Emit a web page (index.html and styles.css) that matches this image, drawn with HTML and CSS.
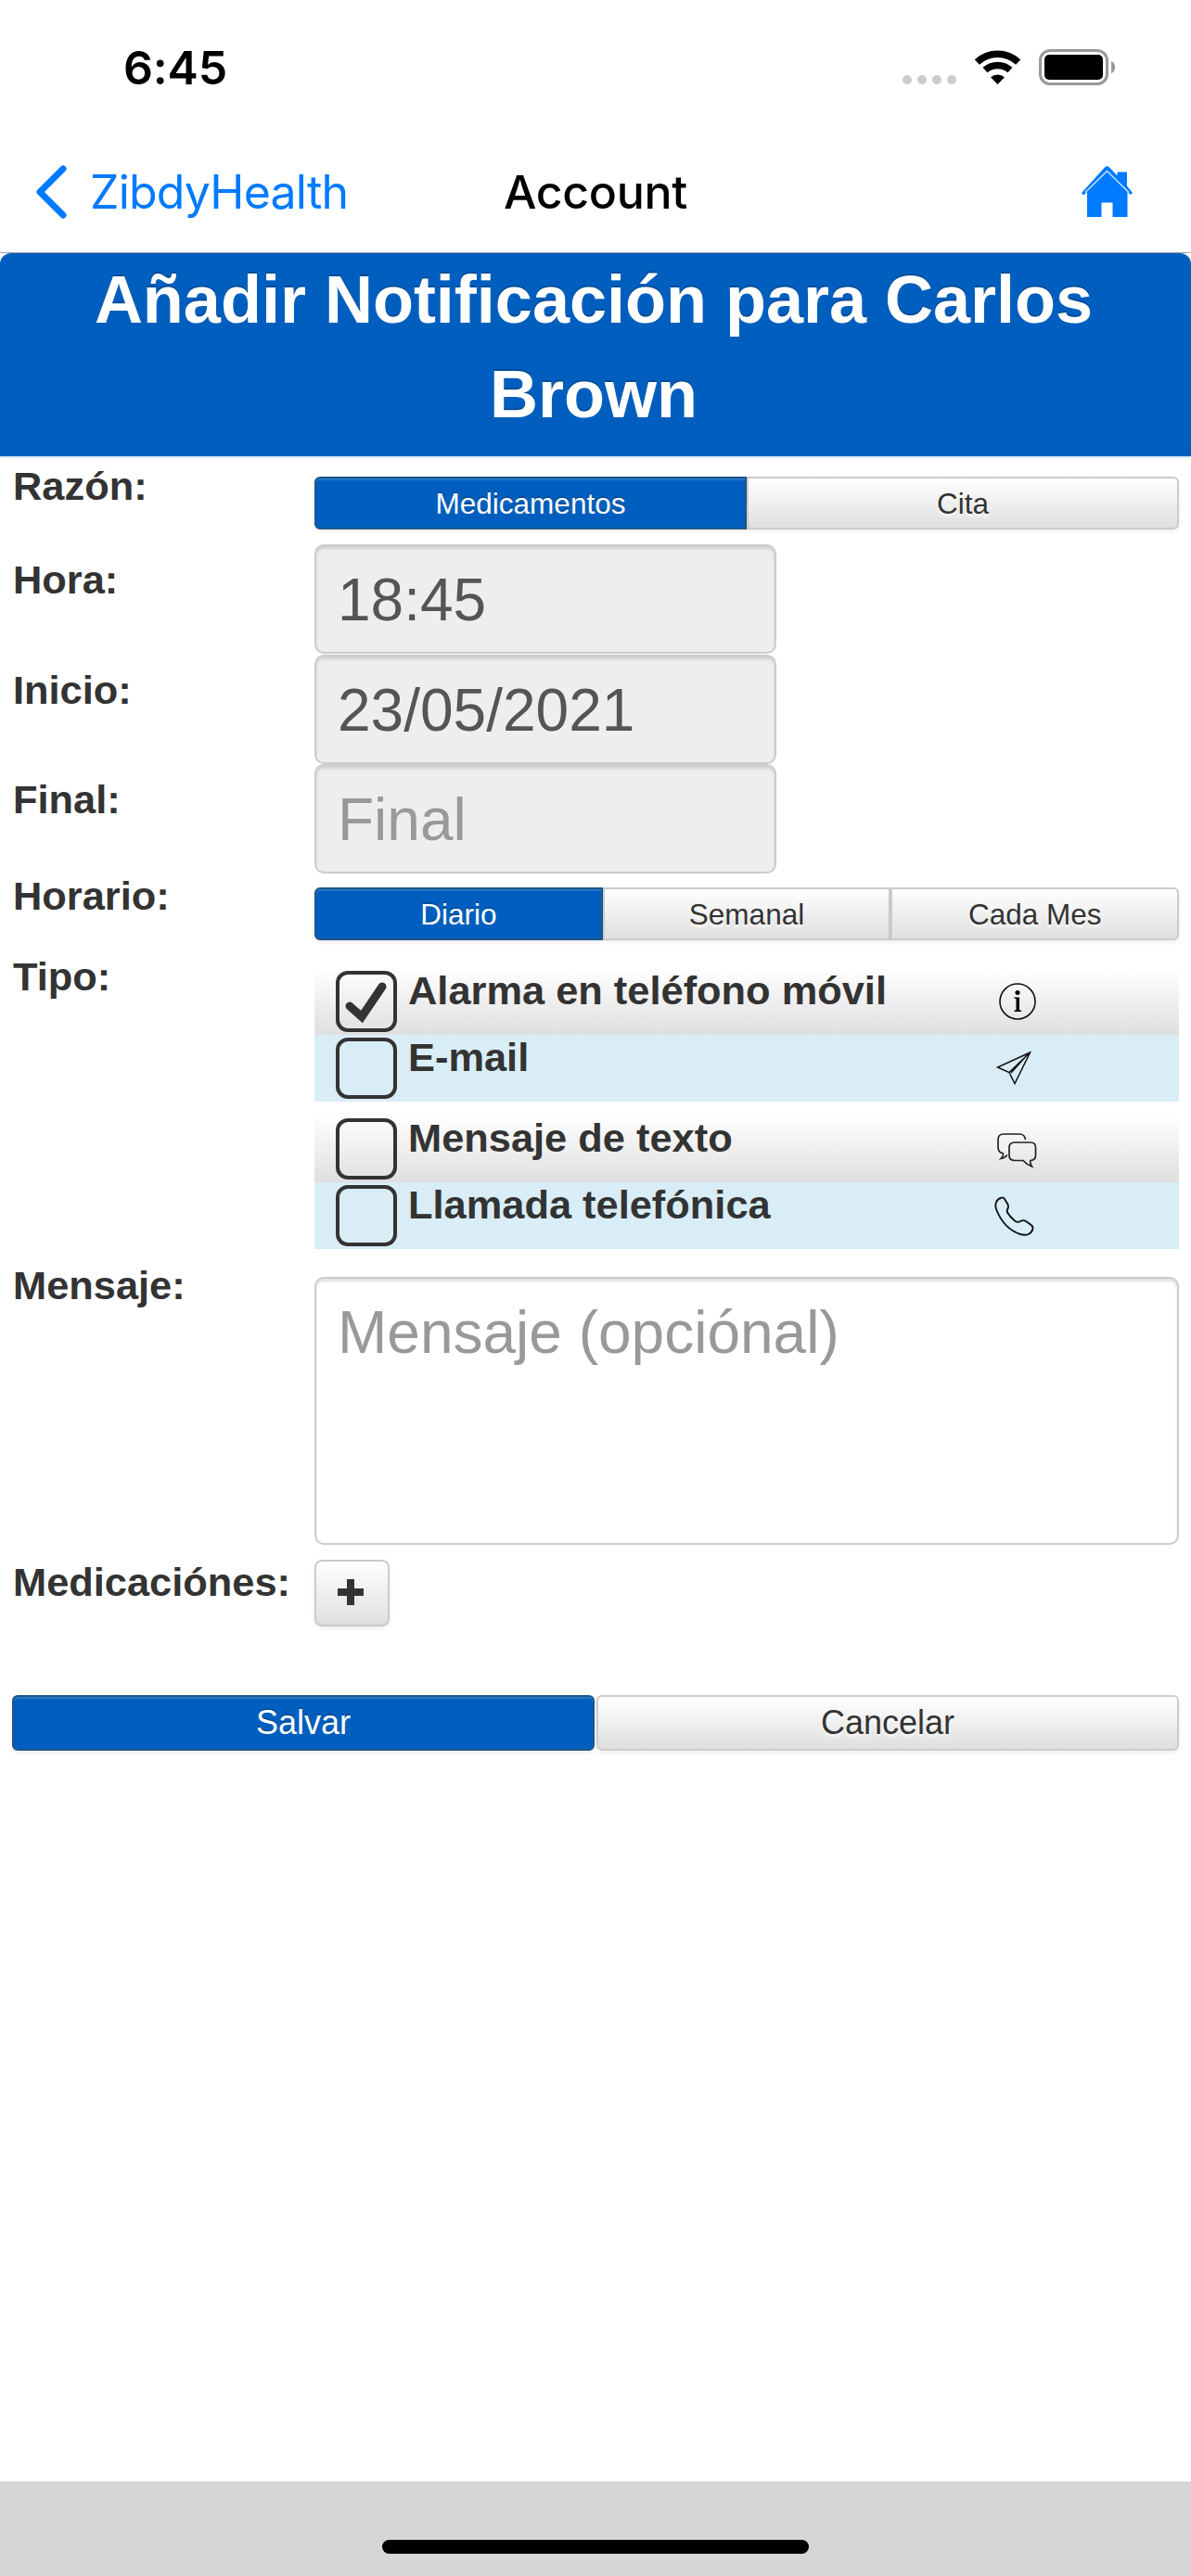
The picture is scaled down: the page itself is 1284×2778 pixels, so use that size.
FILE: index.html
```html
<!DOCTYPE html>
<html lang="es">

<head>
	<meta charset="utf-8">
	<title>Account</title>
	<link rel="stylesheet" href="styles.css">
</head>

<body>
	<div class="status">
		<span class="clock">6:45</span>
		<svg class="status-icons" width="232" height="42" viewBox="0 0 232 42">
			<g fill="#ccc">
				<circle cx="6" cy="34" r="5"/>
				<circle cx="22" cy="34" r="5"/>
				<circle cx="38" cy="34" r="5"/>
				<circle cx="54" cy="34" r="5"/>
			</g>
			<path d="M103.500 39 L96 31.200 A11.500 11.500 0 0 1 111 31.200 Z"/>
			<path d="M90 23.500 A20.500 20.500 0 0 1 117 23.500" fill="none" stroke="#000" stroke-width="7.500"/>
			<path d="M81.300 15 A32.500 32.500 0 0 1 125.700 15" fill="none" stroke="#000" stroke-width="7.500"/>
			<rect x="149.500" y="2.500" width="72" height="36" rx="10.500" fill="none" stroke="#999" stroke-width="3"/>
			<rect x="154" y="7" width="63" height="27" rx="5"/>
			<path d="M226 14 C231.500 16 231.500 25 226 27 Z" fill="#999"/>
		</svg>
	</div>

	<div class="navbar">
		<a class="back" href="#">
			<svg width="36" height="60" viewBox="0 0 36 60"><path d="M31 5 L6 30 L31 55" fill="none" stroke="#007aff" stroke-width="7" stroke-linecap="round" stroke-linejoin="round"/></svg>
			<span>ZibdyHealth</span>
		</a>
		<span class="title">Account</span>
		<a class="home" href="#">
			<svg width="56" height="56" viewBox="0 0 56 56">
				<path d="M0 29 L25 1.500 Q27.500 -1 30 1.500 L38.500 10.500 V6.500 H49 V21.500 L55 29 L53 31 L49.500 28 V55 H33.500 V39.500 H21.500 V55 H6 V28 L2 31.500 Z" fill="#007aff"/>
				<path d="M4 28.500 L27.500 5.500 L51 28.500" fill="none" stroke="#cfe5ff" stroke-width="1.400"/>
			</svg>
		</a>
	</div>

	<h1>Añadir Notificación para Carlos Brown</h1>

	<form>
		<div class="row row-reason">
			<label>Razón:</label>
			<div class="group">
				<button type="button" class="btn active">Medicamentos</button>
				<button type="button" class="btn">Cita</button>
			</div>
		</div>
		<div class="row row-input">
			<label>Hora:</label>
			<input type="text" value="18:45" readonly>
		</div>
		<div class="row row-input">
			<label>Inicio:</label>
			<input type="text" value="23/05/2021" readonly>
		</div>
		<div class="row row-input">
			<label>Final:</label>
			<input type="text" placeholder="Final" readonly>
		</div>
		<div class="row row-schedule">
			<label>Horario:</label>
			<div class="group">
				<button type="button" class="btn active">Diario</button>
				<button type="button" class="btn">Semanal</button>
				<button type="button" class="btn">Cada Mes</button>
			</div>
		</div>
		<div class="row row-type">
			<label>Tipo:</label>
			<div class="types">
				<div class="type">
					<span class="check"><svg width="66" height="66" viewBox="0 0 66 66"><path d="M15 38 L28 49.500 L50 17" fill="none" stroke="#333" stroke-width="9" stroke-linecap="round"/></svg></span>
					<span class="name">Alarma en teléfono móvil</span>
					<svg class="icon" width="50" height="72" viewBox="0 0 50 72">
						<circle cx="27" cy="36" r="19" fill="none" stroke="#111" stroke-width="1.600"/>
						<circle cx="27" cy="26.500" r="2.500"/>
						<path d="M23.500 31.500 H29 V45.500 H31 V47 H23.500 V45.500 H25.500 V33 H23.500 Z"/>
					</svg>
				</div>
				<div class="type blue">
					<span class="check"></span>
					<span class="name">E-mail</span>
					<svg class="icon" width="50" height="72" viewBox="0 0 50 72" fill="none" stroke="#111" stroke-width="1.500">
						<path d="M40.500 19 L5.500 35 L18 40.500 L24 52.500 Z M40.500 19 L18 40.500 M37 22 L20 41"/>
					</svg>
				</div>
				<div class="type second">
					<span class="check"></span>
					<span class="name">Mensaje de texto</span>
					<svg class="icon" width="50" height="72" viewBox="0 0 50 72" fill="none" stroke="#222" stroke-width="1.700">
						<path d="M35.500 26 C35 22 33 20 29 20 H12 Q6 20 6 26 V34 Q6 40 11 40.500 Q12.500 43 9 46.500 Q13 46 16 42.500"/>
						<path d="M24 29 H41 Q46.500 29 46.500 34.500 V43 Q46.500 48 41 48.500 Q40 51 42.500 55 Q37 53 33 48.500 H24 Q18 48.500 18 43 V34.500 Q18 29 24 29 Z"/>
					</svg>
				</div>
				<div class="type blue">
					<span class="check"></span>
					<span class="name">Llamada telefónica</span>
					<svg class="icon" width="50" height="72" viewBox="0 0 50 72" fill="none" stroke="#111" stroke-width="1.900">
						<path d="M10 16.500 C4 18 2 24 4 29 C9 42 18 52 30 56 C37 58 42 56 43.500 50 C44 48 43 47 41 45.500 L36 42 C34 40.500 32 41 30 42 C28 43.500 26 43 24 41.500 C21 39 18 36 16 32.500 C15 31 16 29 17 27 C17.500 25 17 24 16 23 L13 18 C12 16.500 11.500 16 10 16.500 Z"/>
					</svg>
				</div>
			</div>
		</div>
		<div class="row row-message">
			<label>Mensaje:</label>
			<textarea placeholder="Mensaje (opciónal)"></textarea>
		</div>
		<div class="row row-meds">
			<label>Medicaciónes:</label>
			<button type="button" class="btn add"><svg width="28" height="28" viewBox="0 0 28 28"><path d="M10 0 H18 V10 H28 V18 H18 V28 H10 V18 H0 V10 H10 Z" fill="#333"/></svg></button>
		</div>
		<div class="actions">
			<button type="button" class="btn active">Salvar</button>
			<button type="button" class="btn">Cancelar</button>
		</div>
	</form>

	<div class="footer"><div class="home-bar"></div></div>
</body>

</html>
```

FILE: styles.css
```css
* {margin: 0; padding: 0; box-sizing: border-box;}
body {width: 1284px; height: 2778px; display: flex; flex-direction: column; background: #fff; color: #333; font-family: "Liberation Sans", Arial, sans-serif; overflow: hidden;}
svg {display: block; flex: none;}

/* status bar */
.status {height: 141px; padding: 0 80px 0 133px; display: flex; justify-content: space-between; align-items: flex-start; color: #000; font-family: Inter, sans-serif;}
.clock {margin-top: 43px; font-size: 50px; line-height: 60px; font-weight: 600; letter-spacing: -.2px;}
.status-icons {margin-top: 52px;}

/* navigation bar */
.navbar {height: 132px; padding: 0 62px; display: grid; grid-template-columns: 1fr auto 1fr; align-items: center; border-bottom: 1px solid #a0a4a8; font-family: Inter, sans-serif; font-size: 50px; line-height: 60px;}
.back {margin-left: -25px; display: flex; align-items: center; gap: 24px; color: #007aff; text-decoration: none; letter-spacing: -.8px;}
.title {color: #000; font-weight: 500; letter-spacing: -.3px;}
.home {justify-self: end;}

h1 {height: 219px; padding: 0 62px 0 58px; background: #005fbe; border-radius: 12px 12px 0 0; color: #fff; font-size: 72px; line-height: 101.500px; text-align: center; text-shadow: 0 -2px 0 rgba(0,0,0,.2); box-shadow: 0 1px 3px rgba(0,95,190,.3);}

/* form rows */
form {flex: 1;}
.row {display: flex; align-items: flex-start; padding: 0 13px 0 14px;}
.row label {width: 325px; flex: none; font-size: 43.400px; line-height: 46px; font-weight: bold;}
.row-reason {height: 95px;}
.row-reason label {padding-top: 9px;}
.row-reason .group {margin-top: 22px;}
.row-input {height: 118.700px;}
.row-input label {padding-top: 15px;}
.row-schedule {height: 87px;}
.row-schedule .group {margin-top: 14px;}
.row-type {height: 333px;}
.row-message {height: 318px;}
.row-meds {height: 147px;}
.row-meds label {padding-top: 2px;}

.group {flex: 1; display: flex; height: 57px;}
.btn {flex: 1 1 0; border: 2px solid #ccc; background: linear-gradient(#fff, #dfdfdf); color: #333; font-family: inherit; font-size: 31.500px; line-height: 36px; text-shadow: 0 3px 3px rgba(255,255,255,.75); box-shadow: 0 2px 5px rgba(0,0,0,.08);}
.btn.active {background: #005fbe; border-color: #1f5689; color: #fff; text-shadow: 0 -2px 0 rgba(0,0,0,.2); box-shadow: inset 0 2px 0 rgba(255,255,255,.15), 0 2px 5px rgba(0,0,0,.08);}
.group .btn:first-child {border-radius: 6px 0 0 6px;}
.group .btn:last-child {border-radius: 0 6px 6px 0;}

input, textarea {border: 2px solid #ccc; border-radius: 10px; color: #555; font-family: inherit; font-size: 64px; line-height: 72px; box-shadow: inset 0 3px 3px rgba(0,0,0,.12); outline: none;}
input {width: 498px; height: 118px; padding: 2px 23px 0; background: #eee;}
textarea {flex: 1; height: 289px; margin-top: 14px; padding: 22px 23px; background: #fff; resize: none;}
::placeholder {color: #999; opacity: 1;}

/* notification types */
.types {flex: 1; margin-top: 14px;}
.type {height: 72px; padding-left: 23px; display: flex; background: linear-gradient(#fff, #dfdfdf);}
.type.blue {background: #d9edf7;}
.type.second {margin-top: 15px;}
.check {width: 66px; height: 66px; margin-top: 3px; border: 4px solid #333; border-radius: 13px;}
.check svg {margin: -4px;}
.name {width: 630px; margin-left: 12px; font-size: 43.400px; font-weight: bold; line-height: 46px; padding-top: 1px;}

.btn.add {flex: none; width: 81px; height: 72px; margin-top: 1px; padding: 0 4px 2px 0; border-radius: 8px; display: flex; align-items: center; justify-content: center;}
.actions {display: flex; gap: 2px; padding: 0 13px;}
.actions .btn {height: 60px; border-radius: 6px; font-size: 36px;}

.footer {height: 102px; padding-top: 63px; background: #d6d6d6;}
.home-bar {width: 460px; height: 15px; margin: 0 auto; border-radius: 8px; background: #000;}
```
